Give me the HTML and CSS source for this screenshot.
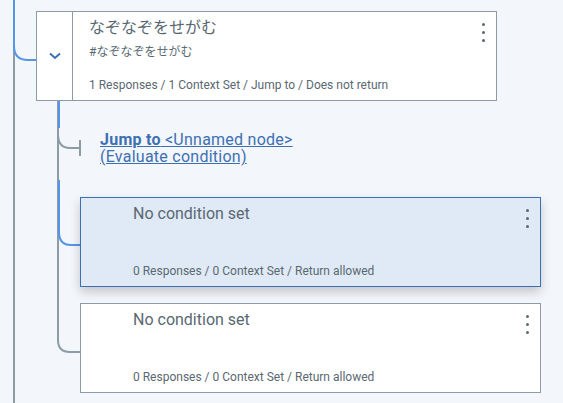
FILE: index.html
```html
<!DOCTYPE html>
<html lang="ja">
<head>
    <meta charset="UTF-8">
    <meta name="viewport" content="width=device-width, initial-scale=1.0">
    <title>Dialog tree</title>
    <link rel="stylesheet" href="styles.css">
</head>
<body>
    <div class="tree">
        <!-- connector lines -->
        <svg class="wires" width="563" height="403" viewBox="0 0 563 403">
            <path class="wire" d="M14 0 V403"/>
            <path class="wire active" d="M14 0 V46 Q14 60 28 60 H36"/>
            <path class="wire" d="M58 100 V340 Q58 352 70 352 H80"/>
            <path class="wire active" d="M59 100 V128"/>
            <path class="wire active" d="M59 180 V232 Q59 245 71 245 H80"/>
            <path class="wire" d="M58 128 V134 Q58 148 70 148 H80 M80 140 V156"/>
        </svg>

        <div class="node node-parent">
            <div class="toggle">
                <svg width="12" height="8" viewBox="0 0 12 8"><path d="M1 1.5 L6 6 L11 1.5" fill="none" stroke="#3d70b2" stroke-width="2"/></svg>
            </div>
            <div class="node-body">
                <div class="node-title">なぞなぞをせがむ</div>
                <div class="node-sub">#なぞなぞをせがむ</div>
                <div class="node-foot">1 Responses / 1 Context Set / Jump to / Does not return</div>
            </div>
            <span class="kebab"><i></i><i></i><i></i></span>
        </div>

        <div class="jump">
            <a href="#"><strong>Jump to</strong> &lt;Unnamed node&gt;</a>
            <a href="#">(Evaluate condition)</a>
        </div>

        <div class="node node-child selected">
            <div class="toggle"></div>
            <div class="node-body">
                <div class="node-title">No condition set</div>
                <div class="node-foot">0 Responses / 0 Context Set / Return allowed</div>
            </div>
            <span class="kebab"><i></i><i></i><i></i></span>
        </div>

        <div class="node node-child">
            <div class="toggle"></div>
            <div class="node-body">
                <div class="node-title">No condition set</div>
                <div class="node-foot">0 Responses / 0 Context Set / Return allowed</div>
            </div>
            <span class="kebab"><i></i><i></i><i></i></span>
        </div>
    </div>
</body>
</html>
```

FILE: styles.css
```css
body {
    margin: 0;
    background: #f3f6fb;
    font-family: Roboto, "Noto Sans CJK JP", sans-serif;
    color: #5a6872;
}
.tree {
    position: relative;
    width: 563px;
    height: 403px;
    overflow: hidden;
    padding-top: 11px;
    box-sizing: border-box;
}
.wires {
    position: absolute;
    left: 0;
    top: 0;
}
.wire {
    fill: none;
    stroke: #8c9ba5;
    stroke-width: 2;
}
.wire.active {
    stroke: #5596e6;
}
.node {
    position: relative;
    display: flex;
    width: 461px;
    height: 90px;
    box-sizing: border-box;
    background: #fff;
    border: 1px solid #8c9ba5;
}
.node-parent {
    margin-left: 36px;
}
.node-child {
    margin-left: 80px;
}
.toggle {
    width: 36px;
    flex-shrink: 0;
    display: flex;
    align-items: center;
    justify-content: center;
    box-sizing: border-box;
}
.node-parent .toggle {
    border-right: 1px solid #8c9ba5;
}
.node-body {
    flex: 1;
    display: flex;
    flex-direction: column;
    padding: 5px 0 7px 16px;
}
.node-title {
    font-size: 16px;
    line-height: 22px;
}
.node-sub {
    font-size: 12px;
    line-height: 16px;
    margin-top: 5px;
}
.node-foot {
    margin-top: auto;
    font-size: 12px;
    line-height: 16px;
}
.kebab {
    position: absolute;
    top: 11px;
    right: 11px;
    display: flex;
    flex-direction: column;
    gap: 5px;
}
.kebab i {
    width: 3px;
    height: 3px;
    border-radius: 50%;
    background: #5a6872;
}
.selected {
    background: #dfeaf6;
    border-color: #3d70b2;
    box-shadow: 0 5px 10px rgba(0, 0, 0, 0.2);
}
.jump {
    display: flex;
    flex-direction: column;
    align-items: flex-start;
    margin: 30px 0 0 100px;
    height: 66px;
    font-size: 16px;
    letter-spacing: 0.25px;
    line-height: 17px;
}
.jump a {
    color: #3d70b2;
}
.selected + .node {
    margin-top: 16px;
}
```
